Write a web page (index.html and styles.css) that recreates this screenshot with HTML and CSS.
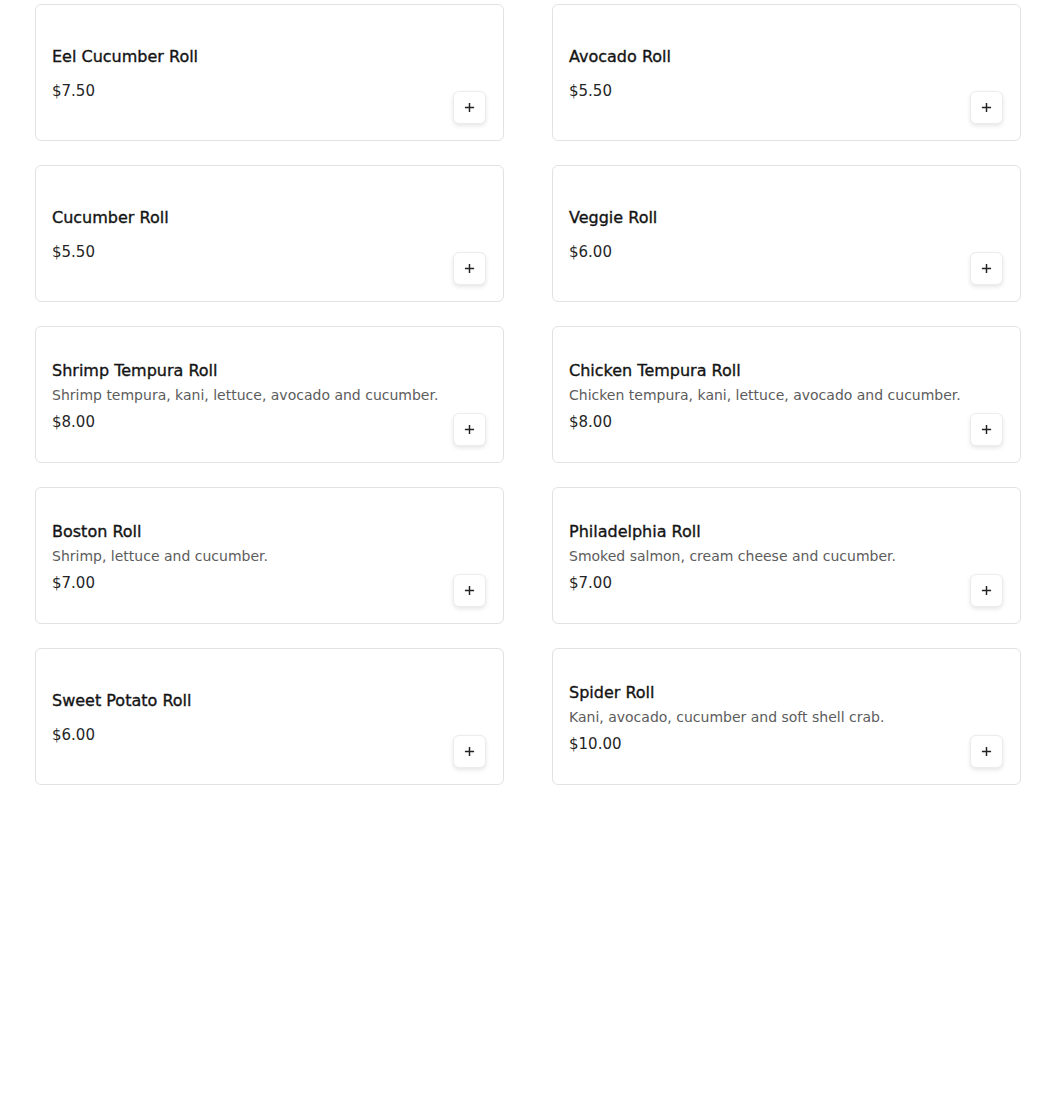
FILE: index.html
```html
<!DOCTYPE html>
<html lang="en">

<head>
  <meta charset="UTF-8">
  <meta name="viewport" content="width=device-width, initial-scale=1.0">
  <title>Rolls</title>
  <link rel="stylesheet" href="styles.css">
</head>

<body>
  <div class="menu">
    <div class="item">
      <div class="info">
        <div class="name">Eel Cucumber Roll</div>
        <div class="price">$7.50</div>
      </div>
      <button class="add"><svg viewBox="0 0 12 12"><path d="M6 1v10M1 6h10" /></svg></button>
    </div>
    <div class="item">
      <div class="info">
        <div class="name">Avocado Roll</div>
        <div class="price">$5.50</div>
      </div>
      <button class="add"><svg viewBox="0 0 12 12"><path d="M6 1v10M1 6h10" /></svg></button>
    </div>
    <div class="item">
      <div class="info">
        <div class="name">Cucumber Roll</div>
        <div class="price">$5.50</div>
      </div>
      <button class="add"><svg viewBox="0 0 12 12"><path d="M6 1v10M1 6h10" /></svg></button>
    </div>
    <div class="item">
      <div class="info">
        <div class="name">Veggie Roll</div>
        <div class="price">$6.00</div>
      </div>
      <button class="add"><svg viewBox="0 0 12 12"><path d="M6 1v10M1 6h10" /></svg></button>
    </div>
    <div class="item">
      <div class="info">
        <div class="name">Shrimp Tempura Roll</div>
        <div class="desc">Shrimp tempura, kani, lettuce, avocado and cucumber.</div>
        <div class="price">$8.00</div>
      </div>
      <button class="add"><svg viewBox="0 0 12 12"><path d="M6 1v10M1 6h10" /></svg></button>
    </div>
    <div class="item">
      <div class="info">
        <div class="name">Chicken Tempura Roll</div>
        <div class="desc">Chicken tempura, kani, lettuce, avocado and cucumber.</div>
        <div class="price">$8.00</div>
      </div>
      <button class="add"><svg viewBox="0 0 12 12"><path d="M6 1v10M1 6h10" /></svg></button>
    </div>
    <div class="item">
      <div class="info">
        <div class="name">Boston Roll</div>
        <div class="desc">Shrimp, lettuce and cucumber.</div>
        <div class="price">$7.00</div>
      </div>
      <button class="add"><svg viewBox="0 0 12 12"><path d="M6 1v10M1 6h10" /></svg></button>
    </div>
    <div class="item">
      <div class="info">
        <div class="name">Philadelphia Roll</div>
        <div class="desc">Smoked salmon, cream cheese and cucumber.</div>
        <div class="price">$7.00</div>
      </div>
      <button class="add"><svg viewBox="0 0 12 12"><path d="M6 1v10M1 6h10" /></svg></button>
    </div>
    <div class="item">
      <div class="info">
        <div class="name">Sweet Potato Roll</div>
        <div class="price">$6.00</div>
      </div>
      <button class="add"><svg viewBox="0 0 12 12"><path d="M6 1v10M1 6h10" /></svg></button>
    </div>
    <div class="item">
      <div class="info">
        <div class="name">Spider Roll</div>
        <div class="desc">Kani, avocado, cucumber and soft shell crab.</div>
        <div class="price">$10.00</div>
      </div>
      <button class="add"><svg viewBox="0 0 12 12"><path d="M6 1v10M1 6h10" /></svg></button>
    </div>
  </div>
</body>

</html>
```

FILE: styles.css
```css
body {
  margin: 0;
  background: #fff;
  font-family: "DejaVu Sans", "Noto Sans", sans-serif;
  color: #111;
}

.menu {
  display: grid;
  grid-template-columns: 469px 469px;
  column-gap: 48px;
  row-gap: 24px;
  padding: 4px 0 0 35px;
}

.item {
  display: flex;
  height: 137px;
  box-sizing: border-box;
  padding: 16px 17px 16px 16px;
  border: 1px solid #e2e2e2;
  border-radius: 6px;
}

.info {
  flex: 1;
  display: flex;
  flex-direction: column;
  justify-content: center;
  padding-top: 3px;
}

.name {
  font-size: 16px;
  line-height: 24px;
  color: #141414;
  -webkit-text-stroke: 0.35px #141414;
}

.price {
  font-size: 15px;
  line-height: 24px;
  color: #262626;
  margin-top: 10px;
}

.desc {
  font-size: 14px;
  line-height: 20px;
  color: #5c5c5c;
  margin-top: 2px;
}

.desc + .price {
  margin-top: 5px;
}

.add {
  align-self: flex-end;
  width: 33px;
  height: 33px;
  padding: 0;
  background: #fff;
  border: 1px solid #ececec;
  border-radius: 6px;
  box-shadow: 0 2px 4px rgba(0, 0, 0, 0.1);
  display: flex;
  align-items: center;
  justify-content: center;
}

.add svg {
  width: 11px;
  height: 11px;
  stroke: #222;
  stroke-width: 1.6;
  fill: none;
}
```
